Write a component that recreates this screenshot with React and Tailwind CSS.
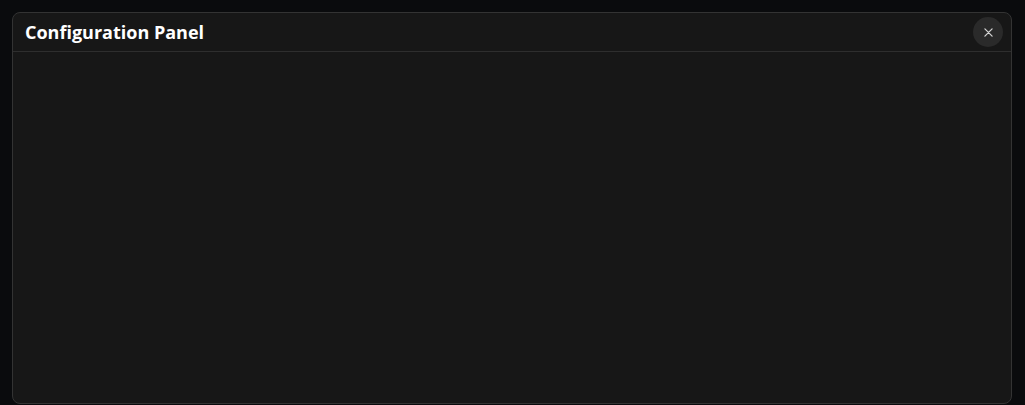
import React from "react";

const App = () => {
  return (
    <div className="w-[1025px] h-[405px] bg-[#0a0b0d] pt-3 px-3 overflow-hidden" style={{ fontFamily: '"Open Sans", sans-serif' }}>
      <div className="w-[1000px] h-[392px] flex flex-col bg-[#171717] border border-[#333333] rounded-lg">
        <div className="h-[39px] flex items-center justify-between pl-3 pr-2 border-b border-[#2e2e2e]">
          <h2 className="text-[18px] font-bold text-white">Configuration Panel</h2>
          <button className="w-[30px] h-[30px] rounded-full bg-[#2a2a2a] flex items-center justify-center text-[#d4d4d4]">
            <svg width="9" height="9" viewBox="0 0 10 10" fill="none" stroke="currentColor" strokeWidth="1.4" strokeLinecap="round">
              <path d="M1 1L9 9M9 1L1 9" />
            </svg>
          </button>
        </div>
        <div className="flex-1" />
      </div>
    </div>
  );
};

export default App;
